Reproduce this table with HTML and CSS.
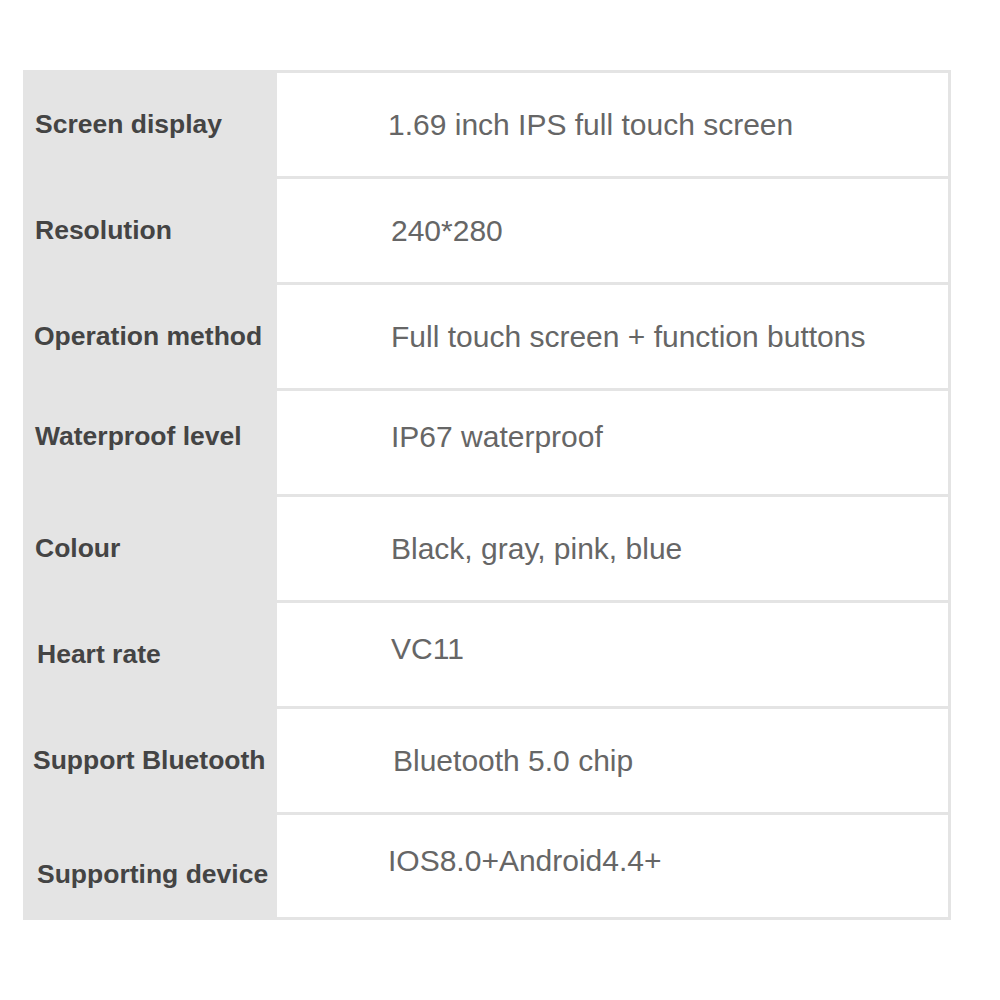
FILE: index.html
```html
<!DOCTYPE html>
<html>
<head>
<meta charset="utf-8">
<link rel="stylesheet" href="styles.css">
</head>
<body>
<div class="spec">
  <div class="label">Screen display</div><div class="value v-sd">1.69 inch IPS full touch screen</div>
  <div class="label">Resolution</div><div class="value">240*280</div>
  <div class="label l-tight">Operation method</div><div class="value">Full touch screen + function buttons</div>
  <div class="label up6">Waterproof level</div><div class="value up6">IP67 waterproof</div>
  <div class="label">Colour</div><div class="value">Black, gray, pink, blue</div>
  <div class="label l-wide">Heart rate</div><div class="value up6">VC11</div>
  <div class="label l-tighter">Support Bluetooth</div><div class="value v-wide">Bluetooth 5.0 chip</div>
  <div class="label l-wide down8">Supporting device</div><div class="value v-sd up5">IOS8.0+Android4.4+</div>
</div>
</body>
</html>
```

FILE: styles.css
```css
html, body {
  margin: 0;
  padding: 0;
  background: #ffffff;
}
body {
  padding: 70px 0 0 23px;
}
.spec {
  width: 925px;
  background: #e4e4e4;
  padding: 3px 3px 3px 0;
  display: grid;
  grid-template-columns: 254px 1fr;
  grid-template-rows: repeat(7, 103px) 102px;
  row-gap: 3px;
  font-family: "Liberation Sans", Arial, sans-serif;
}
.label {
  display: flex;
  align-items: center;
  padding-left: 12px;
  font-weight: bold;
  font-size: 26.5px;
  color: #444444;
}
.l-tight {
  padding-left: 11px;
}
.l-tighter {
  padding-left: 10px;
}
.l-wide {
  padding-left: 14px;
}
.value {
  display: flex;
  align-items: center;
  background: #ffffff;
  padding-left: 114px;
  font-size: 30px;
  color: #666666;
}
.v-sd {
  padding-left: 111px;
}
.v-wide {
  padding-left: 116px;
}
.up6 {
  padding-bottom: 12px;
}
.up5 {
  padding-bottom: 10px;
}
.down8 {
  padding-top: 16px;
}
```
